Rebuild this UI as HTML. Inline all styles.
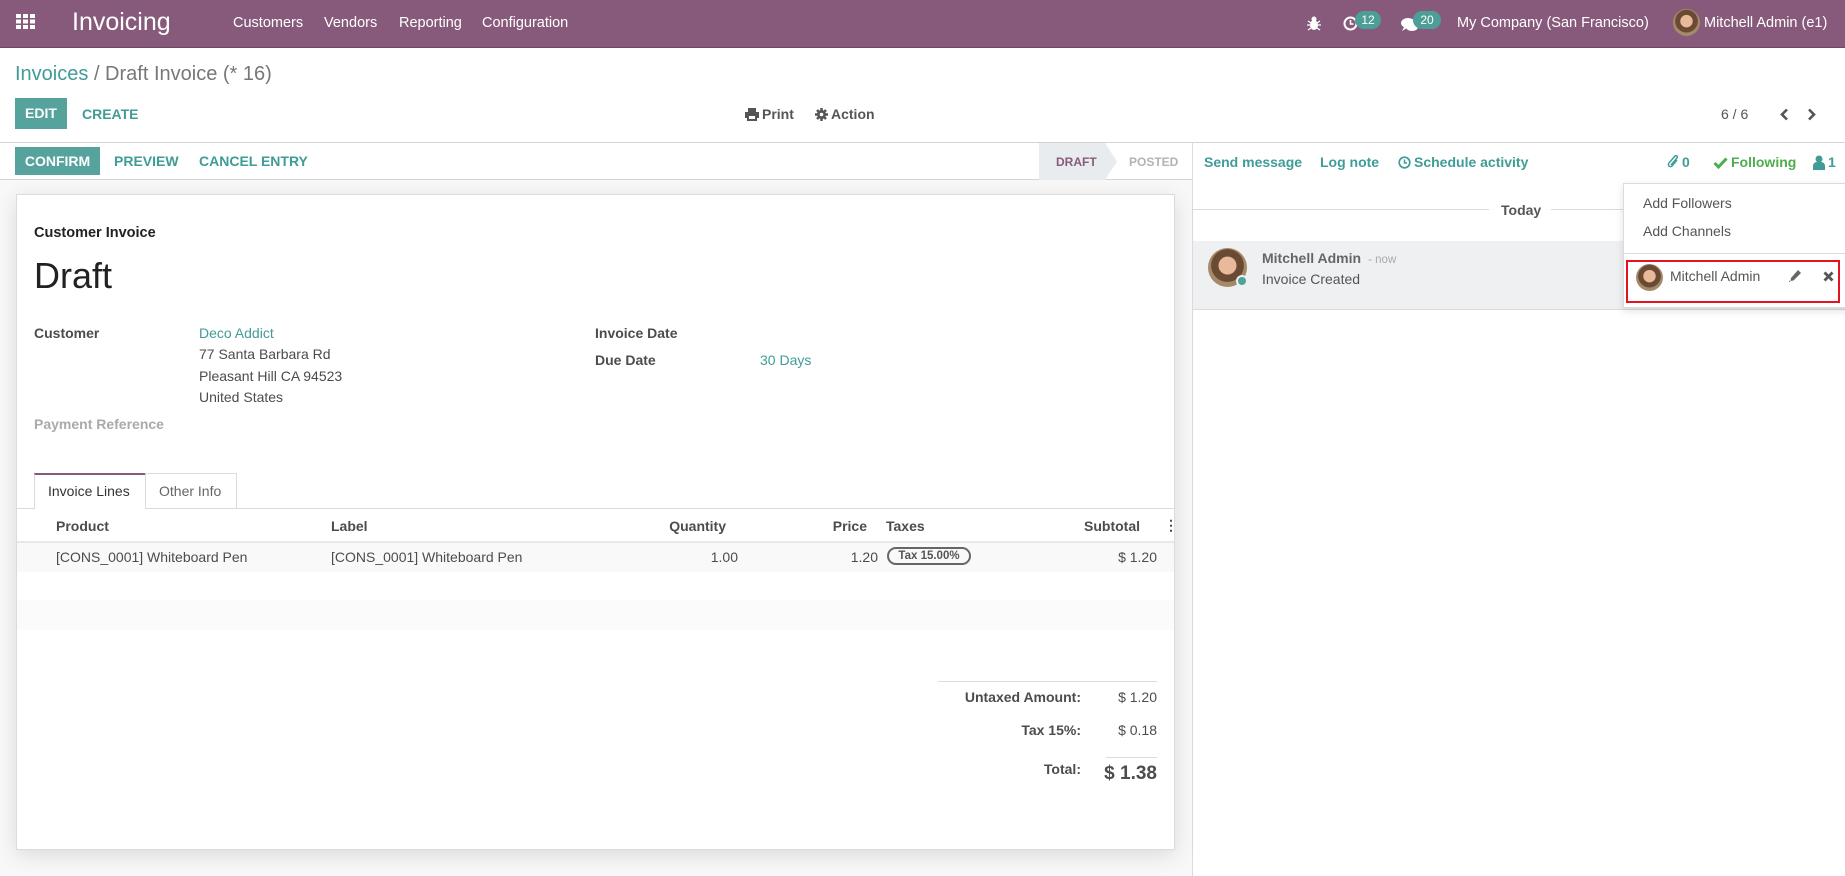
<!DOCTYPE html>
<html><head><meta charset="utf-8"><style>
*{box-sizing:border-box;margin:0;padding:0}
body{width:1845px;height:876px;overflow:hidden;background:#fff;font-family:"Liberation Sans",sans-serif;font-size:14px;color:#4c4c4c;position:relative}
.a{position:absolute;white-space:nowrap}
.nav{position:absolute;left:0;top:0;width:1845px;height:48px;background:#875a7b;border-bottom:1px solid #6d4863;color:#fff}
.nav .a{color:#fff;font-size:14.5px;top:15px}
.teal{color:#3f9c96}
.btn{position:absolute;background:#56a39d;color:#fff;font-weight:bold;font-size:14px;text-align:center}
.hl{position:absolute;height:1px;background:#d9dbe0}
.b{font-weight:bold}
.av{position:absolute;border-radius:50%;background:radial-gradient(circle at 50% 45%,#e8b99a 0 30%,#6b4a33 32% 55%,#a58a6a 58%)}
.r{text-align:right}
.f .a{margin-top:2px}
</style></head><body>
<div class="nav">
 <svg class="a" style="left:16px;top:14px" width="20" height="15" viewBox="0 0 20 15"><g fill="#fff"><rect x="0" y="0" width="5" height="4"/><rect x="7" y="0" width="5" height="4"/><rect x="14" y="0" width="5" height="4"/><rect x="0" y="5.5" width="5" height="4"/><rect x="7" y="5.5" width="5" height="4"/><rect x="14" y="5.5" width="5" height="4"/><rect x="0" y="11" width="5" height="4"/><rect x="7" y="11" width="5" height="4"/><rect x="14" y="11" width="5" height="4"/></g></svg>
 <div class="a" style="left:72px;top:8px;font-size:25px">Invoicing</div>
 <div class="a" style="left:233px">Customers</div>
 <div class="a" style="left:324px">Vendors</div>
 <div class="a" style="left:399px">Reporting</div>
 <div class="a" style="left:482px">Configuration</div>
 <svg class="a" style="left:1307px;top:15px" width="14" height="16" viewBox="0 0 14 16"><g fill="#fff"><ellipse cx="7" cy="10" rx="4" ry="5"/><circle cx="7" cy="4" r="2.5"/><path d="M1 6l3 2M13 6l-3 2M0 10h3M14 10h-3M1 15l3-2M13 15l-3-2" stroke="#fff" stroke-width="1.3"/></g></svg>
 <svg class="a" style="left:1343px;top:16px" width="15" height="15" viewBox="0 0 15 15"><circle cx="7.5" cy="7.5" r="6" fill="none" stroke="#fff" stroke-width="2"/><path d="M7.5 4v4h3" stroke="#fff" stroke-width="1.5" fill="none"/></svg>
 <div class="a" style="left:1355px;top:11px;width:26px;height:18px;border-radius:9px;background:#4d9e97;font-size:12px;text-align:center;line-height:18px;top:11px">12</div>
 <svg class="a" style="left:1400px;top:17px" width="20" height="16" viewBox="0 0 20 16"><ellipse cx="8" cy="6" rx="7" ry="5" fill="#fff"/><ellipse cx="12" cy="10" rx="6" ry="4" fill="#fff"/><path d="M4 10l-2 4 5-3z" fill="#fff"/></svg>
 <div class="a" style="left:1413px;top:11px;width:28px;height:18px;border-radius:9px;background:#4d9e97;font-size:12px;text-align:center;line-height:18px;top:11px">20</div>
 <div class="a" style="left:1457px">My Company (San Francisco)</div>
 <div class="av" style="left:1673px;top:9px;width:27px;height:27px"></div>
 <div class="a" style="left:1704px">Mitchell Admin (e1)</div>
</div>

<div class="a teal" style="left:15px;top:63px;font-size:20px">Invoices <span style="color:#777">/ Draft Invoice (* 16)</span></div>
<div class="btn" style="left:15px;top:98px;width:52px;height:31px;line-height:31px">EDIT</div>
<div class="a teal b" style="left:82px;top:106px;font-size:14px">CREATE</div>
<svg class="a" style="left:745px;top:108px" width="14" height="13" viewBox="0 0 14 13"><path d="M3 0h8v4H3zM0 4h14v6h-2v3H2v-3H0z" fill="#555"/><rect x="4" y="8" width="6" height="3" fill="#fff"/></svg>
<div class="a b" style="left:762px;top:106px;color:#555">Print</div>
<svg class="a" style="left:815px;top:108px" width="13" height="13" viewBox="0 0 13 13"><circle cx="6.5" cy="6.5" r="4.5" fill="#555"/><g stroke="#555" stroke-width="2.5"><path d="M6.5 0v13M0 6.5h13M2 2l9 9M11 2l-9 9"/></g><circle cx="6.5" cy="6.5" r="1.8" fill="#fff"/></svg>
<div class="a b" style="left:831px;top:106px;color:#555">Action</div>
<div class="a" style="left:1721px;top:106px;color:#555">6 / 6</div>
<svg class="a" style="left:1779px;top:108px" width="10" height="13" viewBox="0 0 10 13"><path d="M8 1.5L3 6.5l5 5" stroke="#555" stroke-width="2.6" fill="none"/></svg>
<svg class="a" style="left:1807px;top:108px" width="10" height="13" viewBox="0 0 10 13"><path d="M2 1.5l5 5-5 5" stroke="#555" stroke-width="2.6" fill="none"/></svg>

<div class="hl" style="left:0;top:142px;width:1845px;background:#d2d4d8"></div>
<div class="a" style="left:0;top:143px;width:1192px;height:733px;background:#f8f8f8"></div>
<div class="a" style="left:0;top:143px;width:1192px;height:37px;background:#fff;border-bottom:1px solid #d2d4d8"></div>
<div class="a" style="left:1192px;top:143px;width:1px;height:733px;background:#d9dbe0"></div>
<div class="btn" style="left:15px;top:147px;width:85px;height:28px;line-height:28px">CONFIRM</div>
<div class="a teal b" style="left:114px;top:153px;font-size:14px">PREVIEW</div>
<div class="a teal b" style="left:199px;top:153px;font-size:14px">CANCEL ENTRY</div>
<svg class="a" style="left:1039px;top:143px" width="80" height="37"><polygon points="0,0 66,0 78,18.5 66,37 0,37" fill="#e9ecef"/></svg>
<div class="a b" style="left:1056px;top:155px;font-size:12px;color:#875a7b">DRAFT</div>
<div class="a b" style="left:1129px;top:155px;font-size:12px;color:#b0b3b8">POSTED</div>

<div class="a" style="left:16px;top:194px;width:1159px;height:656px;background:#fff;border:1px solid #d9dbe0;box-shadow:0 5px 20px rgba(0,0,0,.12)"></div>
<div class="f">
<div class="a b" style="left:34px;top:223px;font-size:14.5px;color:#222">Customer Invoice</div>
<div class="a" style="left:34px;top:253px;font-size:36px;color:#222">Draft</div>
<div class="a b" style="left:34px;top:323px">Customer</div>
<div class="a teal" style="left:199px;top:323px">Deco Addict</div>
<div class="a" style="left:199px;top:344px">77 Santa Barbara Rd</div>
<div class="a" style="left:199px;top:366px">Pleasant Hill CA 94523</div>
<div class="a" style="left:199px;top:387px">United States</div>
<div class="a b" style="left:34px;top:414px;color:#aaa">Payment Reference</div>
<div class="a b" style="left:595px;top:323px">Invoice Date</div>
<div class="a b" style="left:595px;top:350px">Due Date</div>
<div class="a teal" style="left:760px;top:350px">30 Days</div>
</div>

<div class="hl" style="left:17px;top:508px;width:1157px"></div>
<div class="a" style="left:34px;top:473px;width:112px;height:36px;background:#fff;border:1px solid #d9dbe0;border-top:2px solid #875a7b;border-bottom:none"></div>
<div class="a" style="left:48px;top:483px;color:#333">Invoice Lines</div>
<div class="a" style="left:145px;top:473px;width:92px;height:35px;border:1px solid #d9dbe0;border-left:none;border-bottom:none"></div>
<div class="a" style="left:159px;top:483px;color:#666">Other Info</div>

<div class="a" style="left:17px;top:541px;width:1157px;height:2px;background:#e6e8eb"></div>
<div class="f">
<div class="a b" style="left:56px;top:516px">Product</div>
<div class="a b" style="left:331px;top:516px">Label</div>
<div class="a b r" style="left:620px;width:106px;top:516px">Quantity</div>
<div class="a b r" style="left:780px;width:87px;top:516px">Price</div>
<div class="a b" style="left:886px;top:516px">Taxes</div>
<div class="a b r" style="left:1040px;width:100px;top:516px">Subtotal</div>
<div class="a b" style="left:1164px;top:515px">&#8942;</div>
</div>
<div class="a" style="left:17px;top:543px;width:1157px;height:29px;background:#f9f9f9"></div>
<div class="f">
<div class="a" style="left:56px;top:547px">[CONS_0001] Whiteboard Pen</div>
<div class="a" style="left:331px;top:547px">[CONS_0001] Whiteboard Pen</div>
<div class="a r" style="left:640px;width:98px;top:547px">1.00</div>
<div class="a r" style="left:790px;width:88px;top:547px">1.20</div>
<div class="a r" style="left:1050px;width:107px;top:547px">$ 1.20</div>
</div>
<div class="a b" style="left:887px;top:547px;width:84px;height:18px;border:2px solid #666;border-radius:9px;font-size:11.5px;line-height:14px;text-align:center;color:#555">Tax 15.00%</div>
<div class="a" style="left:17px;top:600px;width:1157px;height:30px;background:#fbfbfb"></div>

<div class="hl" style="left:938px;top:681px;width:219px"></div>
<div class="f">
<div class="a b r" style="left:900px;width:181px;top:687px">Untaxed Amount:</div>
<div class="a r" style="left:1100px;width:57px;top:687px">$ 1.20</div>
<div class="a b r" style="left:900px;width:181px;top:720px">Tax 15%:</div>
<div class="a r" style="left:1100px;width:57px;top:720px">$ 0.18</div>
<div class="a b r" style="left:900px;width:181px;top:759px">Total:</div>
<div class="a b r" style="left:1080px;width:77px;top:761px;font-size:19px">$ 1.38</div>
</div>
<div class="hl" style="left:1106px;top:757px;width:51px"></div>

<div class="f">
<div class="a teal b" style="left:1204px;top:152px">Send message</div>
<div class="a teal b" style="left:1320px;top:152px">Log note</div>
<div class="a teal b" style="left:1414px;top:152px">Schedule activity</div>
<div class="a teal b" style="left:1682px;top:152px">0</div>
<div class="a b" style="left:1731px;top:152px;color:#4cae4c">Following</div>
<div class="a teal b" style="left:1828px;top:152px">1</div>
</div>
<svg class="a" style="left:1398px;top:156px" width="13" height="13" viewBox="0 0 13 13"><circle cx="6.5" cy="6.5" r="5.3" fill="none" stroke="#3f9c96" stroke-width="1.7"/><path d="M6.5 3.5v3.5h2.5" stroke="#3f9c96" stroke-width="1.5" fill="none"/></svg>
<svg class="a" style="left:1667px;top:155px" width="13" height="15" viewBox="0 0 13 15"><path d="M10 5l-5 6a2 2 0 01-3-3l6-7a1.4 1.4 0 012 2l-6 7" stroke="#3f9c96" stroke-width="1.5" fill="none"/></svg>
<svg class="a" style="left:1713px;top:157px" width="15" height="12" viewBox="0 0 15 12"><path d="M1.5 6l4 4 8-8.5" stroke="#4cae4c" stroke-width="3" fill="none"/></svg>
<svg class="a" style="left:1813px;top:155px" width="12" height="15" viewBox="0 0 12 15"><circle cx="6" cy="4" r="3.5" fill="#3f9c96"/><path d="M0 15v-4a4 4 0 014-4h4a4 4 0 014 4v4z" fill="#3f9c96"/></svg>

<div class="hl" style="left:1193px;top:209px;width:296px"></div>
<div class="a b" style="left:1501px;top:202px;color:#555">Today</div>
<div class="hl" style="left:1551px;top:209px;width:80px"></div>
<div class="a" style="left:1193px;top:241px;width:652px;height:69px;background:#eef0f2;border-bottom:1px solid #d9dbe0"></div>
<div class="av" style="left:1208px;top:248px;width:39px;height:39px"></div>
<div class="a" style="left:1236px;top:275px;width:12px;height:12px;border-radius:50%;background:#4ea39a;border:2px solid #eef0f2"></div>
<div class="a b" style="left:1262px;top:250px;color:#666">Mitchell Admin <span style="font-weight:normal;font-size:11.5px;color:#aaa">&nbsp;- now</span></div>
<div class="a" style="left:1262px;top:271px;color:#555">Invoice Created</div>

<div class="a" style="left:1623px;top:183px;width:230px;height:125px;background:#fff;border:1px solid #d9dbe0;box-shadow:0 3px 8px rgba(0,0,0,.12)"></div>
<div class="a" style="left:1643px;top:195px;color:#555">Add Followers</div>
<div class="a" style="left:1643px;top:223px;color:#555">Add Channels</div>
<div class="hl" style="left:1624px;top:253px;width:221px"></div>
<div class="a" style="left:1626px;top:260px;width:214px;height:43px;border:2px solid #e3141f"></div>
<div class="av" style="left:1636px;top:264px;width:27px;height:27px"></div>
<div class="a" style="left:1670px;top:268px;color:#555">Mitchell Admin</div>
<svg class="a" style="left:1789px;top:270px" width="12" height="12" viewBox="0 0 12 12"><path d="M9 0l3 3-7.5 7.5-3 .5.5-3z" fill="#666"/><path d="M0 12l1-1" stroke="#666"/></svg>
<svg class="a" style="left:1823px;top:271px" width="11" height="11" viewBox="0 0 11 11"><path d="M1.5 1.5l8 8M9.5 1.5l-8 8" stroke="#555" stroke-width="2.8"/></svg>
</body></html>
